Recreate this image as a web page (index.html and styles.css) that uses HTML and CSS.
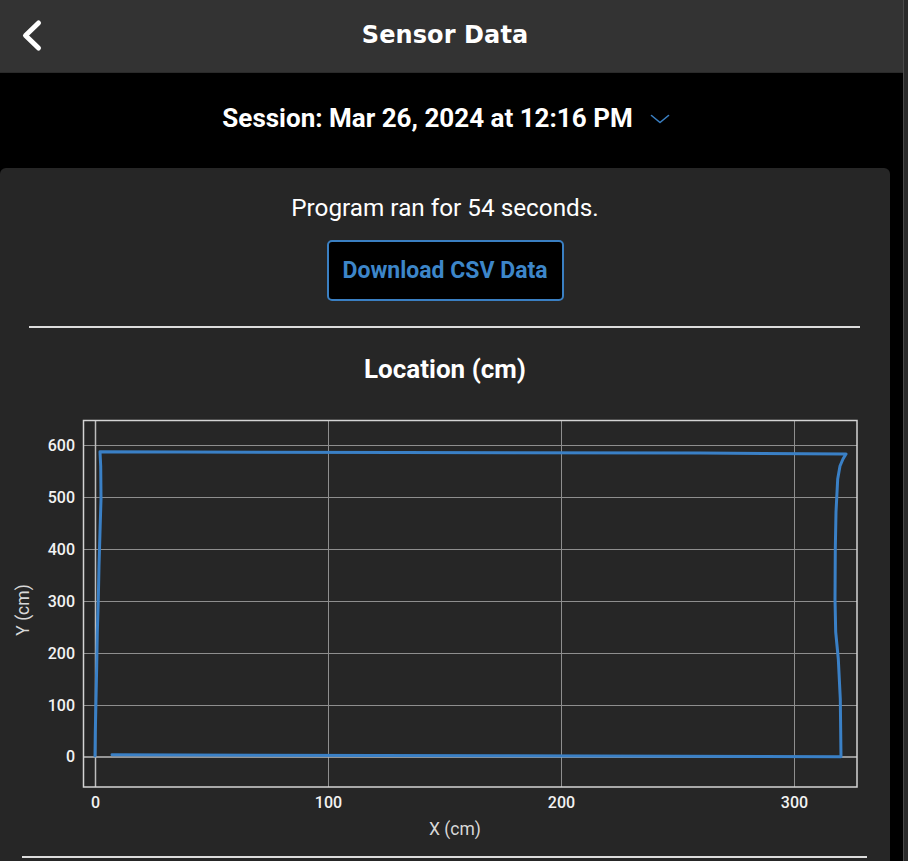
FILE: index.html
```html
<!DOCTYPE html>
<html lang="en">
<head>
<meta charset="utf-8">
<title>Sensor Data</title>
<link rel="stylesheet" href="styles.css">
</head>
<body>
<div class="page">
  <div class="main">
    <header class="topbar">
      <button class="back" aria-label="Back">
        <svg width="24" height="34" viewBox="0 0 24 34"><polyline points="17.5,4 4.5,16.5 17.5,29" fill="none" stroke="#fff" stroke-width="5" stroke-linecap="round" stroke-linejoin="round"/></svg>
      </button>
      <h1 class="title">Sensor Data</h1>
      <span></span>
    </header>
    <div class="session">
      <span class="session-text">Session: Mar 26, 2024 at 12:16 PM</span>
      <svg class="caret" width="20" height="10" viewBox="0 0 20 10"><polyline points="1.5,1.5 10,8.5 18.5,1.5" fill="none" stroke="#3a7fc2" stroke-width="1.6" stroke-linecap="round" stroke-linejoin="round"/></svg>
    </div>
    <section class="card">
      <p class="runtime">Program ran for 54 seconds.</p>
      <button class="download">Download CSV Data</button>
      <hr class="rule">
      <h2 class="chart-title">Location (cm)</h2>
      <svg class="chart" width="890" height="445" viewBox="0 400 890 445">
        <g class="grid">
          <line x1="328.5" y1="422" x2="328.5" y2="788"/>
          <line x1="561.5" y1="422" x2="561.5" y2="788"/>
          <line x1="794.5" y1="422" x2="794.5" y2="788"/>
          <line x1="84" y1="446.5" x2="857" y2="446.5"/>
          <line x1="84" y1="498.5" x2="857" y2="498.5"/>
          <line x1="84" y1="550.5" x2="857" y2="550.5"/>
          <line x1="84" y1="602.5" x2="857" y2="602.5"/>
          <line x1="84" y1="654.5" x2="857" y2="654.5"/>
          <line x1="84" y1="706.5" x2="857" y2="706.5"/>
        </g>
        <g class="zero">
          <line x1="95.5" y1="422" x2="95.5" y2="788"/>
          <line x1="84" y1="758" x2="857" y2="758"/>
        </g>
        <rect class="frame" x="83.5" y="421.5" width="773.5" height="366.5"/>
        <path class="trace" d="M112,755.8 L500,756.8 L841,757.8 L840.3,700 L838.3,660 L835.7,633 L835,600 L835.3,550 L836,513 L837.7,480 L840,467 L843,460 L846,455 L700,454 L400,453.5 L100,452.8 L100.7,467 L101,500 L100,533 L99,567 L98.3,600 L97.3,633 L96.7,667 L96,700 L95.3,733 L95,757"/>
        <g class="ytick">
          <text x="75" y="452">600</text>
          <text x="75" y="504">500</text>
          <text x="75" y="556">400</text>
          <text x="75" y="608">300</text>
          <text x="75" y="660">200</text>
          <text x="75" y="712">100</text>
          <text x="75" y="763">0</text>
        </g>
        <g class="xtick">
          <text x="95.5" y="809">0</text>
          <text x="328.5" y="809">100</text>
          <text x="561.5" y="809">200</text>
          <text x="794.5" y="809">300</text>
        </g>
        <text class="axis-label" x="455" y="836">X (cm)</text>
        <text class="axis-label" x="0" y="0" transform="translate(29 611) rotate(-90)">Y (cm)</text>
      </svg>
      <hr class="rule wide">
    </section>
  </div>
  <div class="gutter"></div>
</div>
</body>
</html>
```

FILE: styles.css
```css
* { box-sizing: border-box; }

html, body {
  margin: 0;
  padding: 0;
  background: #000;
  height: 861px;
  overflow: hidden;
}

body {
  font-family: Roboto, "Liberation Sans", Arial, sans-serif;
  color: #fff;
}

.page {
  display: flex;
  height: 861px;
}

.main {
  width: 903px;
  display: flex;
  flex-direction: column;
}

.gutter {
  width: 5px;
  background: #2a2a2a;
  border-left: 1px solid #4a4a4a;
}

.topbar {
  height: 73px;
  background: #333333;
  border-bottom: 1px solid #2a2a2a;
  display: grid;
  grid-template-columns: 1fr auto 1fr;
  align-items: center;
  padding: 0 13px 0 0;
}

.back {
  background: none;
  border: 0;
  padding: 0;
  width: 24px;
  height: 34px;
  display: flex;
  cursor: pointer;
  margin: 0 0 0 21px;
}

.title {
  margin: -3px 0 0;
  font-family: "DejaVu Sans", Verdana, sans-serif;
  font-weight: 700;
  font-size: 24px;
  line-height: 30px;
  color: #fff;
  letter-spacing: 0.1px;
}

.session {
  width: 890px;
  height: 95px;
  display: flex;
  align-items: center;
  justify-content: center;
  gap: 17px;
  padding-bottom: 6px;
}

.session-text {
  font-weight: 700;
  font-size: 26px;
  line-height: 30px;
  color: #fff;
  margin-left: 2px;
}

.caret {
  margin-top: 3px;
}

.card {
  width: 890px;
  flex: 1;
  background: #262626;
  border-radius: 6px 6px 0 0;
  display: flex;
  flex-direction: column;
  align-items: center;
  padding-top: 25px;
}

.runtime {
  margin: 0;
  font-size: 24.3px;
  line-height: 30px;
  color: #fff;
}

.download {
  margin-top: 17px;
  width: 237px;
  height: 61px;
  background: #000;
  border: 2px solid #3a7fc2;
  border-radius: 5px;
  color: #3d86c9;
  font-family: Roboto, "Liberation Sans", Arial, sans-serif;
  font-weight: 700;
  font-size: 23px;
  padding: 0;
  cursor: pointer;
}

.rule {
  align-self: stretch;
  margin: 25px 30px 0 29px;
  border: 0;
  height: 2px;
  background: #dcdcdc;
}

.rule.wide {
  margin: 12px 23px 0 22px;
}

.chart-title {
  margin: 26px 0 0;
  font-size: 26px;
  font-weight: 700;
  line-height: 30px;
  color: #fff;
}

.chart {
  display: block;
  margin-top: 15px;
  align-self: flex-start;
}

.grid line {
  stroke: #8e8e8e;
  stroke-width: 1;
}

.zero line {
  stroke: #bdbdbd;
  stroke-width: 1.5;
}

.frame {
  fill: none;
  stroke: #d4d4d4;
  stroke-width: 1.5;
}

.trace {
  fill: none;
  stroke: #3a80c6;
  stroke-width: 3;
  stroke-linejoin: round;
  stroke-linecap: round;
}

.ytick text {
  font-family: Roboto, "Liberation Sans", Arial, sans-serif;
  font-size: 16px;
  font-weight: 500;
  fill: #f2f2f2;
  text-anchor: end;
}

.xtick text {
  font-family: Roboto, "Liberation Sans", Arial, sans-serif;
  font-size: 16px;
  font-weight: 500;
  fill: #f2f2f2;
  text-anchor: middle;
}

.axis-label {
  font-family: Roboto, "Liberation Sans", Arial, sans-serif;
  font-size: 17.5px;
  fill: #d8d8d8;
  text-anchor: middle;
}
```
